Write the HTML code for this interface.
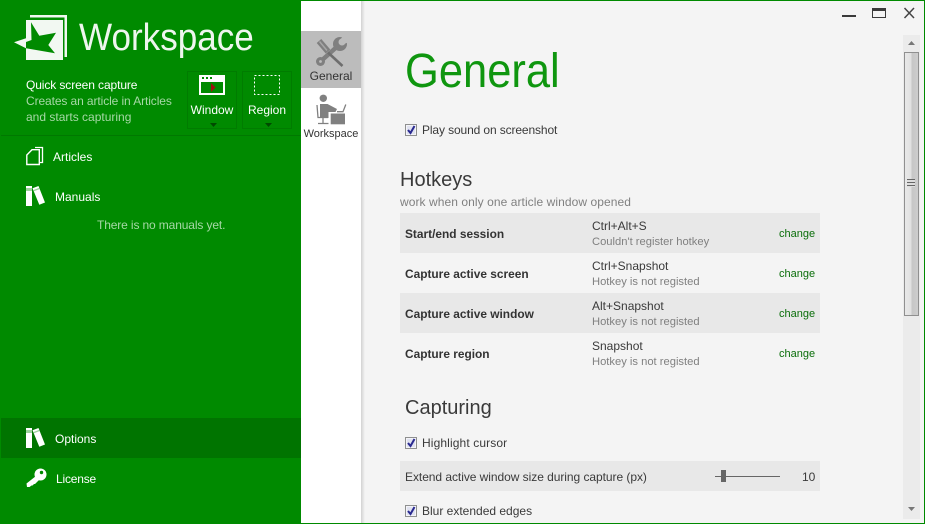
<!DOCTYPE html>
<html><head><meta charset="utf-8">
<style>
html,body{margin:0;padding:0;width:925px;height:524px;overflow:hidden;background:#f4f4f4}
body{position:relative;font-family:"Liberation Sans",sans-serif;font-size:12px;color:#3a3a3a}
.a{position:absolute;white-space:nowrap;line-height:16px}
svg{position:absolute;overflow:visible}
.w{color:#fff}
.row{position:absolute;left:400px;width:420px;height:40px;background:#e8e8e8}
.b{font-weight:bold;color:#333;left:405px;font-size:11.9px}
.k{left:592px;color:#3a3a3a}
.s{left:592px;color:#808080;font-size:11.2px}
.c{left:779px;color:#0a6e0a;font-size:11px}
.cb{position:absolute;width:10px;height:10px;border:1px solid #8e8f8f;background:#e0e2f0;box-shadow:inset 0 0 0 1px #f4f4f8}
.cb svg{left:0;top:0}
</style></head><body>
<div class="a" style="left:0;top:0;width:301px;height:524px;background:#008a00"></div>
<div class="a" style="left:0;top:418px;width:301px;height:40px;background:#007400"></div>
<div class="a" style="left:0;top:135px;width:301px;height:1px;background:#007800"></div>
<div class="a" style="left:301px;top:0;width:60px;height:524px;background:#fff"></div>
<div class="a" style="left:301px;top:31px;width:60px;height:57px;background:#bcbcbc"></div>
<div class="a" style="left:361px;top:0;width:4px;height:524px;background:linear-gradient(90deg,#d2d2d2,#f4f4f4)"></div>

<svg style="left:0;top:0" width="90" height="70">
<path d="M30 15H67V57H64.500V17.500H30Z" fill="#f2f8f2"/>
<rect x="26" y="20" width="37" height="40" fill="#f2f8f2"/>
<path d="M31 22.300L39.300 35.700L56 32.700L48.300 45L55 53.300L26 48.300V42L31.500 40Z" fill="#008a00"/>
<path d="M14 42.300L26 38.300V48.300Z" fill="#f2f8f2"/>
</svg>
<div class="a" style="left:79px;top:16px;font-size:38px;line-height:44px;color:#eef6ee;transform:scaleX(.923);transform-origin:0 0">Workspace</div>

<div class="a w" style="left:26px;top:77px;letter-spacing:-.1px">Quick screen capture</div>
<div class="a" style="left:26px;top:93px;color:#a6d8a6;letter-spacing:-.1px">Creates an article in Articles</div>
<div class="a" style="left:26px;top:109px;color:#a6d8a6">and starts capturing</div>

<div class="a" style="left:187px;top:71px;width:48px;height:56px;border:1px solid #007c00"></div>
<div class="a" style="left:242px;top:71px;width:48px;height:56px;border:1px solid #007c00"></div>
<svg style="left:199px;top:75px" width="26" height="20"><rect width="26" height="20" fill="#fff"/><rect x="2" y="7" width="22" height="11" fill="#008a00"/><rect x="3" y="2" width="2" height="2" fill="#008a00"/><rect x="7" y="2" width="2" height="2" fill="#008a00"/><rect x="11" y="2" width="2" height="2" fill="#008a00"/><path d="M12 8L16.500 12.500L12 17Z" fill="#a01010"/></svg>
<svg style="left:254px;top:75px" width="26" height="20"><rect x=".5" y=".5" width="25" height="19" fill="none" stroke="#fff" stroke-dasharray="2 2"/></svg>
<div class="a w" style="left:190px;top:102px;width:44px;text-align:center">Window</div>
<div class="a w" style="left:245px;top:102px;width:44px;text-align:center">Region</div>
<svg style="left:210px;top:123px" width="8" height="5"><path d="M0 0H7L3.500 4Z" fill="#004a00"/></svg>
<svg style="left:265px;top:123px" width="8" height="5"><path d="M0 0H7L3.500 4Z" fill="#004a00"/></svg>

<svg style="left:26px;top:146px" width="18" height="20"><path d="M9 1.500H16.500V16.500H14" fill="none" stroke="#fff" stroke-width="1.300"/><path d="M6 3.700H13.300V18.500H.8V9Z" fill="none" stroke="#fff" stroke-width="1.400"/></svg>
<div class="a w" style="left:53px;top:149px">Articles</div>
<svg style="left:26px;top:186px" width="20" height="21"><rect width="6" height="20" fill="#fff"/><rect y="2" width="6" height="3" fill="#9ed29e"/><path d="M6.500 2.300L12.500 0L19 16.500L13.300 18.800Z" fill="#fff"/><path d="M7.500 4L13.300 1.700L13.800 3L8 5.300Z" fill="#9ed29e"/></svg>
<div class="a w" style="left:55px;top:189px">Manuals</div>
<div class="a" style="left:97px;top:217px;color:#a6d8a6;letter-spacing:-.13px">There is no manuals yet.</div>

<svg style="left:26px;top:428px" width="20" height="21"><rect width="6" height="20" fill="#fff"/><rect y="2" width="6" height="3" fill="#9ed29e"/><path d="M6.500 2.300L12.500 0L19 16.500L13.300 18.800Z" fill="#fff"/><path d="M7.500 4L13.300 1.700L13.800 3L8 5.300Z" fill="#9ed29e"/></svg>
<div class="a w" style="left:55px;top:431px">Options</div>
<svg style="left:26px;top:468px" width="21" height="21"><circle cx="14.500" cy="6.500" r="6" fill="#fff"/><circle cx="15.500" cy="4.500" r="1.700" fill="#008a00"/><path d="M10 8L.5 15.500L1 19H3.500L5.500 17.500L6.500 17.500L8 16L9 16L14 11Z" fill="#fff"/></svg>
<div class="a w" style="left:56px;top:471px;letter-spacing:-.2px">License</div>

<svg style="left:316px;top:37px" width="32" height="30">
<path d="M4.500 24.500L24 7" stroke="#7f7f7f" stroke-width="4.500"/>
<circle cx="24" cy="7" r="7" fill="#7f7f7f"/>
<circle cx="4.500" cy="24.500" r="4.500" fill="#7f7f7f"/>
<circle cx="4.500" cy="24.500" r="1.400" fill="#bcbcbc"/>
<circle cx="26" cy="5" r="3.500" fill="#bcbcbc"/>
<path d="M24 3L27 -1H33V5L28 7Z" fill="#bcbcbc"/>
<path d="M3 4L12 14.500" stroke="#bcbcbc" stroke-width="8"/>
<path d="M3 4L12 14.500" stroke="#7f7f7f" stroke-width="6"/>
<path d="M3.500 4.500L11 13.500" stroke="#a6a6a6" stroke-width="1.500"/>
<path d="M12 15.500L26.500 29" stroke="#6e6e6e" stroke-width="2.600"/>
</svg>
<div class="a" style="left:301px;top:68px;width:60px;text-align:center;color:#333">General</div>
<svg style="left:316px;top:94px" width="32" height="32">
<circle cx="7.300" cy="4.300" r="3.700" fill="#808080"/>
<path d="M4 10H11.500L21 15L19.500 18H12.500V24H4Z" fill="#808080"/>
<path d="M1 11L2 23.500H12M7 24V29M2 29.500H12.500" fill="none" stroke="#808080" stroke-width="1.300"/>
<rect x="14.700" y="19.500" width="14.300" height="10.800" fill="#808080"/>
<path d="M21 17.700H27L29.800 10.500" fill="none" stroke="#808080" stroke-width="1.300"/>
</svg>
<div class="a" style="left:301px;top:126px;width:60px;text-align:center;color:#333;font-size:11px">Workspace</div>

<div class="a" style="left:405px;top:44px;font-size:48px;line-height:56px;color:#0f960f;transform:scaleX(.906);transform-origin:0 0">General</div>

<div class="cb" style="left:405px;top:124px"><svg width="10" height="10"><path d="M2 5L4.500 8L8.500 1" fill="none" stroke="#2a2a90" stroke-width="2"/></svg></div>
<div class="a" style="left:422px;top:122px;letter-spacing:-.12px">Play sound on screenshot</div>

<div class="a" style="left:400px;top:167px;font-size:20px;line-height:26px">Hotkeys</div>
<div class="a" style="left:400px;top:194px;color:#808080;letter-spacing:.07px">work when only one article window opened</div>

<div class="row" style="top:213px"></div>
<div class="row" style="top:293px"></div>
<div class="a b" style="top:226px">Start/end session</div>
<div class="a k" style="top:218px">Ctrl+Alt+S</div><div class="a s" style="top:234px">Couldn't register hotkey</div><div class="a c" style="top:226px">change</div>
<div class="a b" style="top:266px">Capture active screen</div>
<div class="a k" style="top:258px">Ctrl+Snapshot</div><div class="a s" style="top:274px">Hotkey is not registed</div><div class="a c" style="top:266px">change</div>
<div class="a b" style="top:306px">Capture active window</div>
<div class="a k" style="top:298px">Alt+Snapshot</div><div class="a s" style="top:314px">Hotkey is not registed</div><div class="a c" style="top:306px">change</div>
<div class="a b" style="top:346px">Capture region</div>
<div class="a k" style="top:338px">Snapshot</div><div class="a s" style="top:354px">Hotkey is not registed</div><div class="a c" style="top:346px">change</div>

<div class="a" style="left:405px;top:395px;font-size:20px;line-height:26px">Capturing</div>
<div class="cb" style="left:405px;top:437px"><svg width="10" height="10"><path d="M2 5L4.500 8L8.500 1" fill="none" stroke="#2a2a90" stroke-width="2"/></svg></div>
<div class="a" style="left:422px;top:435px;letter-spacing:.12px">Highlight cursor</div>
<div class="row" style="top:461px;height:30px"></div>
<div class="a" style="left:405px;top:469px;letter-spacing:-.05px">Extend active window size during capture (px)</div>
<div class="a" style="left:715px;top:476px;width:65px;height:1px;background:#666"></div>
<div class="a" style="left:721px;top:470px;width:5px;height:12px;background:#666"></div>
<div class="a" style="left:802px;top:469px">10</div>
<div class="cb" style="left:405px;top:505px"><svg width="10" height="10"><path d="M2 5L4.500 8L8.500 1" fill="none" stroke="#2a2a90" stroke-width="2"/></svg></div>
<div class="a" style="left:422px;top:503px">Blur extended edges</div>

<div class="a" style="left:842px;top:15px;width:14px;height:2px;background:#3a3a3a"></div>
<svg style="left:872px;top:8px" width="14" height="10"><rect x=".5" y=".5" width="13" height="9" fill="none" stroke="#3a3a3a"/><rect width="14" height="3" fill="#3a3a3a"/></svg>
<svg style="left:904px;top:8px" width="11" height="10"><path d="M.5 0L10 10M10 0L.5 10" stroke="#444" stroke-width="1.500"/></svg>

<div class="a" style="left:903px;top:35px;width:17px;height:484px;background:#ebebeb"></div>
<svg style="left:908px;top:41px" width="7" height="5"><path d="M3.500 0L7 4H0Z" fill="#777"/></svg>
<svg style="left:908px;top:507px" width="7" height="5"><path d="M0 0H7L3.500 4Z" fill="#777"/></svg>
<div class="a" style="left:904px;top:52px;width:13px;height:262px;border:1px solid #8f8f8f;background:linear-gradient(90deg,#e8e8e8 0,#e0e0e0 50%,#c6c6c6 51%,#cdcdcd 100%)"></div>
<div class="a" style="left:907px;top:179px;width:8px;height:8px;background:repeating-linear-gradient(180deg,#666 0,#666 1px,#ddd 1px,#ddd 3px)"></div>

<div class="a" style="left:0;top:0;width:923px;height:522px;border:1px solid #008a00"></div>
</body></html>
